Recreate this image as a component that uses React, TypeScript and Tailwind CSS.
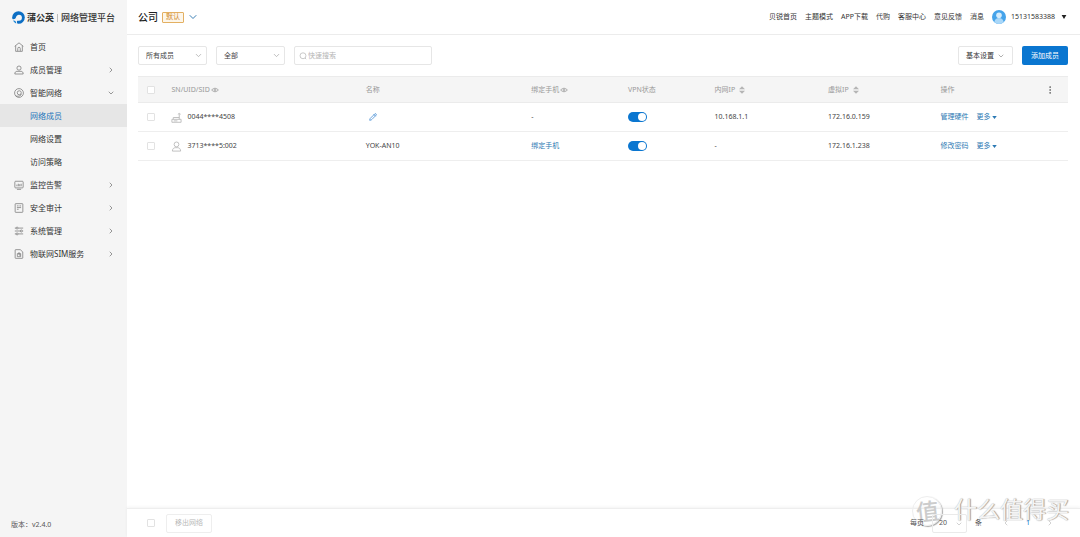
import type { ReactNode } from 'react';
import { ChevronDown, ChevronLeft, ChevronRight, EllipsisVertical, Pencil } from 'lucide-react';

const NAV_LINKS = ['贝锐首页', '主题模式', 'APP下载', '代购', '客服中心', '意见反馈', '消息'];

type MenuItem = { label: string; icon: ReactNode; children?: string[]; expandable?: boolean };

const MENU: MenuItem[] = [
  { label: '首页', icon: <path d="M.8 5.200 6 1l5.200 4.200M2 4.500V11.200h8V4.500M4.500 11V7.800a1.500 1.500 0 0 1 3 0V11" /> },
  {
    label: '成员管理',
    expandable: true,
    icon: (
      <>
        <circle cx="6" cy="3.700" r="2.500" />
        <path d="M1 10.800c0-2.200 1-3.200 2.500-3.200h5c1.500 0 2.500 1 2.500 3.200z" />
      </>
    ),
  },
  {
    label: '智能网络',
    expandable: true,
    children: ['网络成员', '网络设置', '访问策略'],
    icon: (
      <>
        <circle cx="6" cy="6" r="5.300" />
        <circle cx="6.300" cy="5.700" r="2.400" />
        <path d="M2 9.500c1.500.4 3.700.6 5.200-.2 1-.5 1.500-1.200 1.500-2.300" />
      </>
    ),
  },
  {
    label: '监控告警',
    expandable: true,
    icon: <path d="M2 1.500h8q1 0 1 1V8.500q0 1-1 1H2q-1 0-1-1V2.500q0-1 1-1zM3.500 11.200h5M3.500 7.500v-2M5.200 7.500v-3M6.900 7.500V5M8.600 7.500v-3" />,
  },
  {
    label: '安全审计',
    expandable: true,
    icon: <path d="M2 .8h8q.6 0 .6.6v9.200q0 .6-.6.6H2q-.6 0-.6-.6V1.400q0-.6.6-.6zM3.500 3.500h2M6.500 3.500h2M3.500 5.500h5M3.500 7.500h2" />,
  },
  {
    label: '系统管理',
    expandable: true,
    icon: (
      <>
        <path d="M1 2.500h1.500M5 2.500h6M1 6h6.500M10 6h1M1 9.500h1.500M5 9.500h6" />
        <circle cx="3.700" cy="2.500" r="1.200" />
        <circle cx="8.800" cy="6" r="1.200" />
        <circle cx="3.700" cy="9.500" r="1.200" />
      </>
    ),
  },
  {
    label: '物联网SIM服务',
    expandable: true,
    icon: (
      <>
        <path d="M2 .8h5.500l3 2.700v7.100q0 .6-.6.6H2q-.6 0-.6-.6V1.400Q1.400.8 2 .8z" />
        <path d="M4 5.500h4v3.700H4zM6 3.700v3.500h2" />
      </>
    ),
  },
];

const MEMBERS = [
  { id: '0044****4508', type: 'router', name: '', phone: '', lan: '10.168.1.1', vip: '172.16.0.159', action: '管理硬件' },
  { id: '3713****5:002', type: 'user', name: 'YOK-AN10', phone: '绑定手机', lan: '-', vip: '172.16.1.238', action: '修改密码' },
];

function Logo() {
  return (
    <svg viewBox="0 0 14 14" className="size-[13px] shrink-0">
      <circle cx="7" cy="7" r="6.800" fill="#0d6fc4" />
      <path d="M0 8.600c2.300.6 3.900-.1 4.300-1.900C4.700 4.900 6 4 7.500 4a3.200 3.200 0 0 1 0 6.400c-.7 0-1.200-.1-1.700.2-.8.500-.6 1.900.2 3.400H0z" fill="#f5f5f5" />
      <path d="M1.200 10.200c1.900-.3 3.200.2 3.400 3.200-1.600-.6-2.700-1.700-3.400-3.200z" fill="#1d86d6" />
    </svg>
  );
}

function Checkbox({ label }: { label: string }) {
  return (
    <input
      type="checkbox"
      aria-label={label}
      className="block size-2 appearance-none rounded-[1px] border border-[#e2e2e2] bg-white checked:bg-[#0a76d0]"
    />
  );
}

function Toggle({ label }: { label: string }) {
  return (
    <input
      type="checkbox"
      role="switch"
      defaultChecked
      aria-label={label}
      className="flex h-[10px] w-[19px] appearance-none items-center justify-start rounded-full bg-gray-300 px-px before:size-2 before:rounded-full before:bg-white checked:justify-end checked:bg-[#0a76d0]"
    />
  );
}

function FilterSelect({ label, options }: { label: string; options: string[] }) {
  return (
    <div className="relative">
      <select aria-label={label} className="block h-[19px] w-[69px] appearance-none rounded-xs border border-[#e6e6e6] bg-white pl-[7px] text-[#444]">
        {options.map((o) => (
          <option key={o}>{o}</option>
        ))}
      </select>
      <ChevronDown className="pointer-events-none absolute top-[5px] right-1 size-[9px] text-[#aaa]" strokeWidth={2} />
    </div>
  );
}

function Eye() {
  return (
    <svg viewBox="0 0 10 8" className="ml-px h-[6px] w-2" fill="none" stroke="currentColor">
      <path d="M.5 4Q5-.8 9.500 4 5 8.800.5 4z" />
      <circle cx="5" cy="4" r="1.300" />
    </svg>
  );
}

function Sorter() {
  return (
    <svg viewBox="0 0 6 8" className="h-2 w-[6px]" fill="#b5b5b5">
      <path d="M0 3.300 3 .3l3 3zM0 4.700l3 3 3-3z" />
    </svg>
  );
}

function MemberIcon({ type }: { type: string }) {
  return (
    <svg viewBox="0 0 12 12" className="size-[11px] shrink-0 text-[#bbb]" fill="none" stroke="currentColor">
      {type === 'router' ? (
        <path d="M1 8h10v3.200H1zM2.500 8V6H9M9 8V2M7.500 2.500 9 1.500l1.500 1M3 9.700h4" />
      ) : (
        <>
          <circle cx="6" cy="3.700" r="2.600" />
          <path d="M1.500 11c0-2.500 1.500-3.500 3-3.700h3c1.500.2 3 1.200 3 3.700z" />
        </>
      )}
    </svg>
  );
}

function Sidebar() {
  return (
    <aside className="flex w-[127px] shrink-0 flex-col bg-[#f5f5f5] text-[8px] text-[#333]">
      <div className="flex h-[35px] items-center pl-3 text-[9px] font-medium">
        <Logo />
        <span className="ml-[2px] font-bold">蒲公英</span>
        <span className="mx-[3px] h-2 w-px bg-[#bbb]" />
        <span>网络管理平台</span>
      </div>
      <nav className="grow">
        {MENU.map((item) => (
          <div key={item.label}>
            <button className="flex h-[23px] w-full items-center pr-3 pl-[14px]">
              <svg viewBox="0 0 12 12" className="size-[10px]" fill="none" stroke="#777" strokeWidth="0.900">
                {item.icon}
              </svg>
              <span className="ml-[6px] grow text-left">{item.label}</span>
              {item.expandable &&
                (item.children ? <ChevronDown className="size-2 text-[#666]" /> : <ChevronRight className="size-2 text-[#666]" />)}
            </button>
            {item.children?.map((child, i) => (
              <a
                key={child}
                href="#"
                className={i === 0 ? 'flex h-[23px] items-center bg-[#e6e6e6] pl-[30px] text-[#1b74bb]' : 'flex h-[23px] items-center pl-[30px]'}
              >
                {child}
              </a>
            ))}
          </div>
        ))}
      </nav>
      <div className="flex h-6 items-center pl-[11px] text-[7px] text-[#555]">版本：v2.4.0</div>
    </aside>
  );
}

function Header() {
  return (
    <header className="flex h-[35px] items-center justify-between border-b border-[#ececec] pr-[13px] pl-[11px]">
      <button className="flex items-center">
        <span className="text-[10px] font-medium text-[#222]">公司</span>
        <span className="ml-1 flex h-[11px] items-center rounded-[1px] border border-[#e3b062] bg-[#fdf6ea] px-[3px] text-[#d08a2c]">默认</span>
        <ChevronDown className="ml-[3px] size-3 text-[#3b7fb5]" strokeWidth={2} />
      </button>
      <nav className="flex items-center gap-2 text-[#333]">
        {NAV_LINKS.map((link) => (
          <a key={link} href="#">
            {link}
          </a>
        ))}
        <button className="flex items-center">
          <svg viewBox="0 0 14 14" className="size-[14px]">
            <circle cx="7" cy="7" r="7" fill="#45a3ea" />
            <circle cx="7" cy="5.200" r="2.800" fill="#d5ecfc" />
            <path d="M2.300 12c.5-2.800 2.200-4 4.700-4s4.200 1.200 4.700 4A7 7 0 0 1 7 14a7 7 0 0 1-4.700-2z" fill="#a9d7f8" />
          </svg>
          <span className="ml-[5px]">15131583388</span>
          <svg viewBox="0 0 6 5" className="ml-[6px] h-1 w-[6px]">
            <path d="M0 0h6L3 5z" fill="#222" />
          </svg>
        </button>
      </nav>
    </header>
  );
}

function Toolbar() {
  return (
    <div className="flex items-center gap-[9px] py-[11px]">
      <FilterSelect label="成员" options={['所有成员']} />
      <FilterSelect label="类型" options={['全部']} />
      <label className="flex h-[19px] w-[138px] items-center rounded-xs border border-[#e6e6e6] pl-1">
        <svg viewBox="0 0 10 10" className="size-2 shrink-0" fill="none" stroke="#bbb">
          <circle cx="5" cy="4.700" r="3.700" />
          <path d="m7.500 7.500 1.500 1.500" />
        </svg>
        <input aria-label="快速搜索" placeholder="快速搜索" className="ml-px w-full min-w-0 outline-none placeholder:text-[#b5b5b5]" />
      </label>
      <button className="ml-auto flex h-[19px] items-center rounded-xs border border-[#e6e6e6] px-[7px] text-[#333]">
        基本设置
        <ChevronDown className="ml-[3px] size-2 text-[#888]" />
      </button>
      <button className="h-[19px] rounded-xs bg-[#0a76d0] px-[9px] text-white">添加成员</button>
    </div>
  );
}

function MemberTable() {
  return (
    <table className="w-full table-fixed text-left text-[#444]">
      <colgroup>
        <col className="w-[3.6%]" />
        <col className="w-[20.9%]" />
        <col className="w-[17.8%]" />
        <col className="w-[10.4%]" />
        <col className="w-[9.3%]" />
        <col className="w-[12.2%]" />
        <col className="w-[12.1%]" />
        <col className="w-[11.2%]" />
        <col />
      </colgroup>
      <thead className="bg-[#f5f5f5] text-[#999]">
        <tr className="h-[26px] border-y border-[#ebebeb] [&>th]:font-normal">
          <th className="pl-[9px]">
            <Checkbox label="全选" />
          </th>
          <th>
            <span className="flex items-center">SN/UID/SID<Eye /></span>
          </th>
          <th>名称</th>
          <th>
            <span className="flex items-center">绑定手机<Eye /></span>
          </th>
          <th>VPN状态</th>
          <th>
            <span className="flex items-center gap-1">内网IP<Sorter /></span>
          </th>
          <th>
            <span className="flex items-center gap-1">虚拟IP<Sorter /></span>
          </th>
          <th>操作</th>
          <th>
            <button aria-label="列设置" className="block">
              <EllipsisVertical className="size-[10px] text-[#666]" />
            </button>
          </th>
        </tr>
      </thead>
      <tbody>
        {MEMBERS.map((m) => (
          <tr key={m.id} className="h-[29px] border-b border-[#eee]">
            <td className="pl-[9px]">
              <Checkbox label={m.id} />
            </td>
            <td>
              <span className="flex items-center gap-[5px]">
                <MemberIcon type={m.type} />
                {m.id}
              </span>
            </td>
            <td>
              {m.name || (
                <button aria-label="编辑名称" className="block pl-[3px]">
                  <Pencil className="size-2" color="#2277cc" strokeWidth={2} />
                </button>
              )}
            </td>
            <td>{m.phone ? <a href="#" className="text-[#2b78b3]">{m.phone}</a> : '-'}</td>
            <td>
              <Toggle label={`VPN ${m.id}`} />
            </td>
            <td>{m.lan}</td>
            <td>{m.vip}</td>
            <td colSpan={2}>
              <span className="flex items-center gap-2 text-[#2b78b3]">
                <a href="#">{m.action}</a>
                <button className="flex items-center">
                  更多
                  <svg viewBox="0 0 6 4" className="ml-px h-[3px] w-[5px]">
                    <path d="M0 0h6L3 4z" fill="currentColor" />
                  </svg>
                </button>
              </span>
            </td>
          </tr>
        ))}
      </tbody>
    </table>
  );
}

function BottomBar() {
  return (
    <footer className="flex h-[29px] items-center border-t border-[#eee] pr-[26px] pl-5 shadow-[0_-1px_3px_rgba(0,0,0,0.05)]">
      <Checkbox label="全选成员" />
      <button className="ml-[11px] h-[19px] rounded-xs border border-[#eee] px-2 text-[#b8b8b8]">移出网络</button>
      <div className="relative z-10 ml-auto flex items-center text-[#555]">
        <label htmlFor="page-size">每页</label>
        <span className="relative mx-2">
          <select id="page-size" className="block h-[19px] w-[35px] appearance-none rounded-xs border border-[#eaeaea] pl-[6px]">
            <option>20</option>
          </select>
          <ChevronDown className="pointer-events-none absolute top-[6px] right-1 size-2 text-[#bbb]" />
        </span>
        条
        <button aria-label="上一页" className="ml-5">
          <ChevronLeft className="size-2 text-[#bbb]" />
        </button>
        <button className="mx-4 text-[#0a76d0]">1</button>
        <button aria-label="下一页">
          <ChevronRight className="size-2 text-[#bbb]" />
        </button>
      </div>
    </footer>
  );
}

function Watermark() {
  return (
    <div className="pointer-events-none absolute right-[11px] bottom-[11px] flex items-center gap-3 leading-none text-[#f4f4f4] [text-shadow:1px_0_1px_#999,0_0_1px_#bbb]">
      <span className="flex size-[30px] items-center justify-center rounded-full border border-[#eee] text-[23px] text-[#ccc] shadow-[1px_1px_1px_#aaa] [text-shadow:none]">
        <span className="-rotate-6 font-medium">值</span>
      </span>
      <span className="pb-1 text-[23px]">什么值得买</span>
    </div>
  );
}

export default function App() {
  return (
    <div className="relative flex min-h-screen bg-white font-['Noto_Sans','Noto_Sans_CJK_SC',sans-serif] text-[7px] leading-[12px]">
      <Sidebar />
      <div className="flex min-w-0 grow flex-col">
        <Header />
        <main className="grow pr-3 pl-[11px]">
          <Toolbar />
          <MemberTable />
        </main>
        <BottomBar />
      </div>
      <Watermark />
    </div>
  );
}
